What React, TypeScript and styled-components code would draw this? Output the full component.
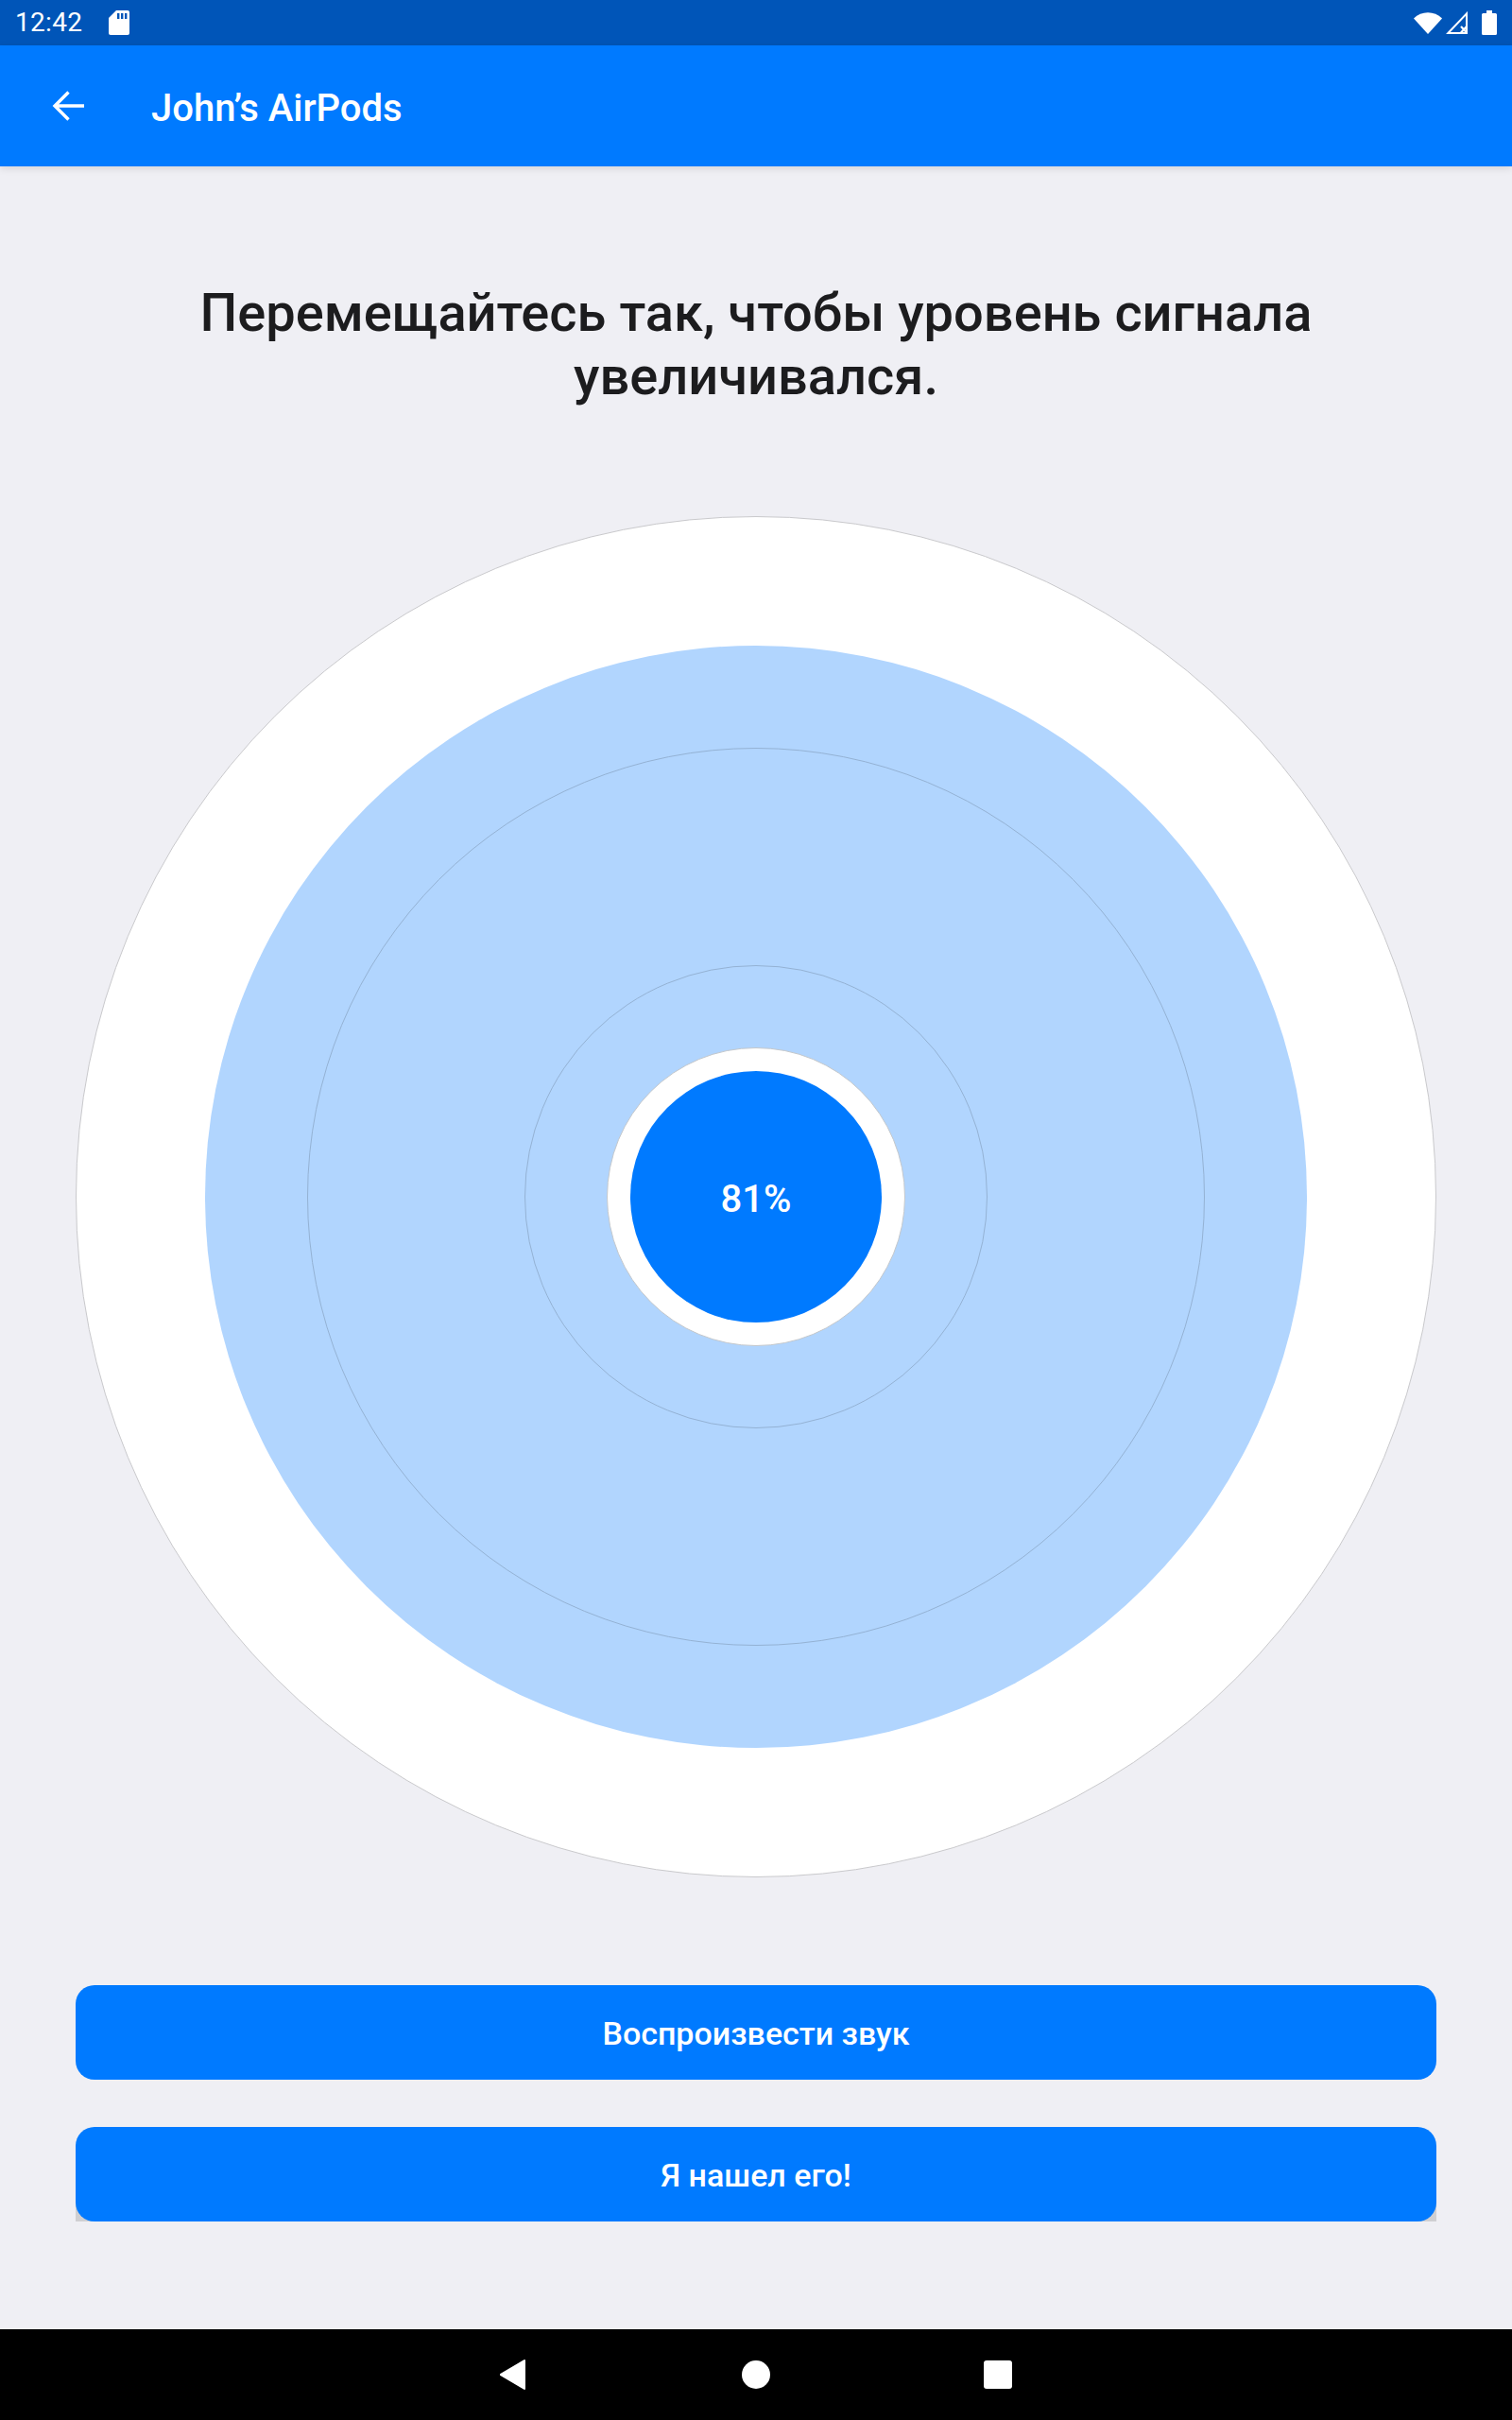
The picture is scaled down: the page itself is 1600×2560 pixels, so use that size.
import * as React from 'react';
import styled, {createGlobalStyle} from 'styled-components';

const GlobalStyle = createGlobalStyle`
    html, body {
        margin: 0;
        padding: 0;
        background: #efeff4;
    }
    body {
        font-family: Roboto, "Liberation Sans", sans-serif;
    }
`;

const Screen = styled.div`
    width: 1600px;
    height: 2560px;
    display: flex;
    flex-direction: column;
    background: #efeff4;
    overflow: hidden;
`;

const StatusBar = styled.div`
    height: 48px;
    flex: none;
    display: flex;
    align-items: center;
    padding: 0 16px 0 16px;
    background: #0055b8;
    color: #ffffff;
`;

const StatusTime = styled.span`
    font-size: 28px;
    letter-spacing: 0.3px;
    line-height: 48px;
    width: 98px;
`;

const StatusIcons = styled.div`
    margin-left: auto;
    display: flex;
    align-items: center;
    gap: 4px;
`;

const BatteryIcon = styled.svg`
    margin-left: 11px;
`;

const AppBar = styled.header`
    height: 128px;
    flex: none;
    display: flex;
    align-items: center;
    padding-left: 52px;
    background: #007aff;
    color: #ffffff;
    box-shadow: 0 2px 8px rgba(0, 0, 0, 0.12);
    z-index: 1;
`;

const AppBarTitle = styled.h1`
    margin: 0 0 0 68px;
    padding-top: 6px;
    font-size: 40px;
    font-weight: 500;
    line-height: 48px;
`;

const Content = styled.main`
    flex: 1;
    display: flex;
    flex-direction: column;
    align-items: center;
    padding: 122px 80px 0;
`;

const Heading = styled.h2`
    margin: 0 0 114px;
    width: 1300px;
    color: #1c1c1e;
    font-size: 56px;
    font-weight: 500;
    line-height: 67px;
    text-align: center;
`;

const Circle = styled.div<{$size: number; $bg?: string; $border?: string}>`
    flex: none;
    box-sizing: border-box;
    width: ${(p) => p.$size}px;
    height: ${(p) => p.$size}px;
    display: flex;
    align-items: center;
    justify-content: center;
    border-radius: 50%;
    background: ${(p) => p.$bg || 'transparent'};
    border: ${(p) => (p.$border ? `1px solid ${p.$border}` : 'none')};
`;

const Percent = styled.span`
    padding-top: 4px;
    color: #ffffff;
    font-size: 40px;
    font-weight: 500;
`;

const Buttons = styled.div`
    margin-top: 114px;
    width: 1440px;
    display: flex;
    flex-direction: column;
    gap: 50px;
`;

const ButtonFrame = styled.div<{$shadowed?: boolean}>`
    height: 100px;
    background: ${(p) => (p.$shadowed ? 'linear-gradient(transparent 80%, #cfcfd2 80%)' : 'transparent')};
`;

const ActionButton = styled.button`
    display: block;
    width: 100%;
    height: 100%;
    padding: 2px 0 0;
    border: none;
    border-radius: 20px;
    background: #007aff;
    color: #ffffff;
    font-family: inherit;
    font-size: 34px;
    font-weight: 500;
`;

const NavBar = styled.nav`
    height: 96px;
    flex: none;
    display: grid;
    grid-template-columns: 30px 30px 30px;
    justify-content: center;
    column-gap: 226px;
    align-items: center;
    background: #000000;
`;

const NavSquare = styled.div`
    width: 30px;
    height: 30px;
    border-radius: 3px;
    background: #ffffff;
`;

const NavDot = styled.div`
    width: 30px;
    height: 30px;
    border-radius: 50%;
    background: #ffffff;
`;

const App: React.FC = () => {
    return (
        <Screen>
            <GlobalStyle />
            <StatusBar>
                <StatusTime>12:42</StatusTime>
                <svg width="24" height="28" viewBox="0 0 24 28">
                    <path
                        fill="#fff"
                        d="M9 1h12a2 2 0 0 1 2 2v22a2 2 0 0 1-2 2H3a2 2 0 0 1-2-2V9z"
                    />
                    <path fill="#0055b8" d="M10 4h2.4v6H10zM14 4h2.4v6H14zM18 4h2.4v6H18z" />
                </svg>
                <StatusIcons>
                    <svg width="30" height="24" viewBox="0 0 30 24">
                        <path fill="#fff" d="M0 7.500C8 -0.800 22 -0.800 30 7.500L15 24z" />
                    </svg>
                    <svg width="23" height="24" viewBox="0 0 23 24">
                        <path
                            fill="none"
                            stroke="#fff"
                            strokeWidth="2"
                            d="M2.400 23 22 2.400V23z"
                        />
                        <path stroke="#fff" strokeWidth="2.200" d="M16 16l6 6.500M22 16l-6 6.500" />
                    </svg>
                    <BatteryIcon width="16" height="26" viewBox="0 0 16 26">
                        <path
                            fill="#fff"
                            d="M5 0h6v3h3.500A1.500 1.500 0 0 1 16 4.500v20a1.500 1.500 0 0 1-1.500 1.500h-13A1.500 1.500 0 0 1 0 24.500v-20A1.500 1.500 0 0 1 1.500 3H5z"
                        />
                    </BatteryIcon>
                </StatusIcons>
            </StatusBar>
            <AppBar>
                <svg width="40" height="40" viewBox="0 0 40 40">
                    <path
                        fill="none"
                        stroke="#fff"
                        strokeWidth="3.400"
                        d="M37 20H7M20.500 5.500 6 20l14.500 14.500"
                    />
                </svg>
                <AppBarTitle>John’s AirPods</AppBarTitle>
            </AppBar>
            <Content>
                <Heading>Перемещайтесь так, чтобы уровень сигнала увеличивался.</Heading>
                <Circle $size={1440} $bg="#ffffff" $border="#c9c9cc">
                    <Circle $size={1166} $bg="#b1d5fe">
                        <Circle $size={950} $border="#94b2d4">
                            <Circle $size={490} $border="#94b2d4">
                                <Circle $size={316} $bg="#ffffff" $border="#c4c8cc">
                                    <Circle $size={266} $bg="#007aff">
                                        <Percent>81%</Percent>
                                    </Circle>
                                </Circle>
                            </Circle>
                        </Circle>
                    </Circle>
                </Circle>
                <Buttons>
                    <ButtonFrame>
                        <ActionButton>Воспроизвести звук</ActionButton>
                    </ButtonFrame>
                    <ButtonFrame $shadowed>
                        <ActionButton>Я нашел его!</ActionButton>
                    </ButtonFrame>
                </Buttons>
            </Content>
            <NavBar>
                <svg width="30" height="34" viewBox="0 0 30 34">
                    <path
                        fill="#fff"
                        stroke="#fff"
                        strokeWidth="2"
                        strokeLinejoin="round"
                        d="M26 2v30L0.500 17z"
                    />
                </svg>
                <NavDot />
                <NavSquare />
            </NavBar>
        </Screen>
    );
};

export default App;
